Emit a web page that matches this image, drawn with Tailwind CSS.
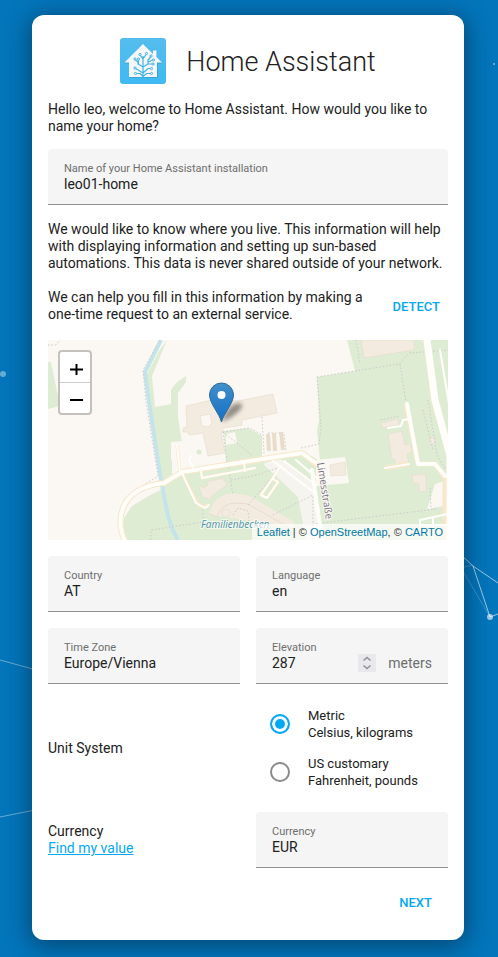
<!DOCTYPE html>
<html lang="en">
<head>
<meta charset="utf-8">
<meta name="viewport" content="width=device-width, initial-scale=1">
<title>Home Assistant</title>
<script src="https://cdn.jsdelivr.net/npm/@tailwindcss/browser@4"></script>
</head>
<body class="relative isolate min-h-screen bg-[#0375bb] pt-[15px] pr-[34px] pb-4 pl-8 font-[Roboto,'Noto_Sans',sans-serif] text-sm leading-[17px] text-[#212121]">

<svg class="absolute inset-0 -z-10 h-full w-full" viewBox="0 0 498 957" preserveAspectRatio="none" fill="none" stroke="#fff" aria-hidden="true">
  <circle cx="3" cy="374" r="3" fill="#fff" fill-opacity=".4" stroke="none"/>
  <circle cx="494" cy="64" r="1" fill="#fff" fill-opacity=".5" stroke="none"/>
  <path d="M0 660 40 671M0 817 40 809" stroke-opacity=".4"/>
  <path d="M460 554 473 566 498 583M473 566 490 617 498 614" stroke-opacity=".6"/>
  <path d="M460 566 490 617M460 568 473 565" stroke-opacity=".2"/>
  <circle cx="490" cy="617" r="3" fill="#fff" fill-opacity=".6" stroke="none"/>
</svg>

<main class="mx-auto max-w-lg rounded-xl bg-white px-4 pt-[23px] pb-[21px] shadow-[0_4px_24px_2px_rgba(0,0,0,0.4)]">
  <header class="flex items-center justify-center gap-5">
    <svg class="size-[46px]" viewBox="0 0 46 46" aria-hidden="true">
      <defs><linearGradient id="logo" x2="0" y2="1"><stop stop-color="#55bdec"/><stop offset="1" stop-color="#3fb9f4"/></linearGradient></defs>
      <rect width="46" height="46" rx="3" fill="url(#logo)"/>
      <path d="M23 7 4 25.500h5V40h29V25.500h4L37 20v-7h-4v3.500z" fill="#2b8fbd" opacity=".5"/>
      <path d="M23 6 4.500 24.500H9V39h28V24.500h5L36.500 19v-6.500H33V16z" fill="#f6f7f8"/>
      <g fill="none" stroke="#41b3e9" stroke-width="1.200">
        <path d="M23 39V18M23 38.500 20 35.500H16M23 38.500 26.500 35.500H31M23 35 15.500 30.500M23 35 28 30.500H31.500M23 29 18 26V24L15 21.500M23 29 28 26V22L31 18.500M28 26h5M18.500 27v-5M23 21 20 17M23 21 26 16.500M28 24l5-2"/>
        <g fill="#f6f7f8" stroke-width="1"><circle cx="20" cy="16.500" r="1.100"/><circle cx="26.500" cy="15.500" r="1.100"/><circle cx="15" cy="21" r="1.100"/><circle cx="18.500" cy="21" r="1.100"/><circle cx="31" cy="18" r="1.100"/><circle cx="33.500" cy="22" r="1.100"/><circle cx="33" cy="26" r="1.100"/><circle cx="15" cy="30" r="1.100"/><circle cx="31.500" cy="30.500" r="1.100"/><circle cx="15.500" cy="35.500" r="1.100"/><circle cx="31.500" cy="35.500" r="1.100"/></g>
      </g>
    </svg>
    <h1 class="pt-0.5 text-[27px] leading-[44px] font-light">Home Assistant</h1>
  </header>

  <form>
    <p class="mt-[17px]">Hello leo, welcome to Home Assistant. How would you like to name your home?</p>
    <div class="mt-3.5 flex h-14 flex-col rounded-t border-b border-[#8e8e8e] bg-[#f5f5f5] px-4 pt-[13px]">
      <label for="name" class="text-[11px] leading-[14px] text-[#6e6e6e]">Name of your Home Assistant installation</label>
      <input id="name" value="leo01-home" class="h-4 w-full bg-transparent outline-none">
    </div>
    <p class="mt-4">We would like to know where you live. This information will help with displaying information and setting up sun-based automations. This data is never shared outside of your network.</p>
    <div class="mt-[17px] flex items-center justify-between">
      <p class="flex-1">We can help you fill in this information by making a one-time request to an external service.</p>
      <button type="button" class="ml-2 px-2 py-2 text-[13px] font-medium text-[#03a9f4]">DETECT</button>
    </div>

    <div class="relative mt-[17px] h-[200px] overflow-hidden bg-[#fbf8f3]">
      <svg class="h-full w-full" viewBox="0 0 400 200" preserveAspectRatio="xMidYMid slice" fill="none" role="img" aria-label="Map of your home">
        <g fill="#dfecd4">
          <path d="M0 22h3l9 44-12 3zM119 0 104 36l3 31 16-3v-14l5-7 10-7v6l-8 11v24l6 38h-12v33l-2-3-7 11 6 16 7 46H78l-5-20 3-20 8-12 20-12 11-5-17-113 13-25z"/>
          <path d="m113 143 17-7 24-9 90-13 20 2 49 37-1 47H123z"/>
          <path d="m176 91 24-3 14 8v22l-36 5zM269 37l38-6-8-31h101v140l-13 4-11 35-88 14-5-22-5-50h-6l-3-31 2-10zM280 183l100-14 20-4v35H282z"/>
        </g>
        <path d="m178 94 9-2 2 11-11 2zM123 102l11-1 22 3 3 22-31 6-5-14zM268 120l29-3 4 26-33 3z" fill="#fbf8f3"/>
        <path d="m231 118 35 27 9 55h-17l-8-43-35-33z" fill="#f6f4ef"/>
        <g fill="#f4ebe0" stroke="#e7dccf" stroke-width=".7">
          <path d="m138 66 26-6 26 1 35-7 4 19-35 7v5l-19 3v4h-2l4 21-17 3-5-23-14 2-1-3h-5v-4l4-1z"/>
          <path d="m313 0 3 18 50-8V0zM333 83l17-4 1 6-17 3zM340 94l14-3 3 14 5-1 2 8-5 2 2 10-13 2-1-6-3-1zM282 125l15-3 1 13-15 1zM364 135l14-1v18l-7-1v-7l-6-1zM382 98l5-1v7h-5zM202 177l5-1 1 5-6 1z"/>
          <path d="m151 147 3-1 2 2 4-3-1-3 16-4 2 3 2 4-14 10-4 5-3-3-3 1z"/>
          <path d="M165 175c3-13 12-19 25-17 8 1 13 2 17 6l38 22" stroke="#f4ebe0" stroke-width="8"/>
          <path d="m162 174 7 3c3-9 10-14 19-14l12 1 42 24" stroke-width="1"/>
          <circle cx="178" cy="173" r="4"/>
        </g>
        <path d="m152 76 10-2 2 9-4 4-6-1z" fill="#fbf8f3" stroke="#e7dccf" stroke-width=".7"/>
        <circle cx="151" cy="112" r="2.500" fill="#dcead0"/>
        <path d="M113 0 97 32l4 30 9 59 4 25c4 17 5 36 16 54" stroke="#c5e4ea" stroke-width="4"/>
        <g stroke="#ccc9cc" stroke-dasharray="1.500 2">
          <path d="m112 0-17 30 3 32 12 74-14 9M103 200v-10l52-8V164M0 5h8l4-5M308 0l4 24M269 37l82-13 10-11 39-3M269 37l4 50-2 17-18 4M352 24l6 38M175 92l27-4 12 7M175 92l30 24M175 92l4 29M214 77l2 36M220 93h16l2 18M332 80l20-4M375 70l10 40M382 148l1 20M258 185l130-16"/>
          <path d="m200 165 30-35M225 175l40-20M180 124l5 31M183 140l22-4 25-8M185 175l5-7 10 3 1 10M265 200v-45M380 60l9 55 9 15"/>
        </g>
        <g stroke="#f8e7c8" stroke-width="6" stroke-linejoin="round">
          <path d="M78 203C67 183 69 148 116 143l18-11 87-14 33-5 19 15M378 0l8 60 15 48"/>
          <path d="m132 133-3-28M134 133l18 34 9-2" stroke-width="3"/>
          <path d="m358 64 12 60h17l10 14v70M337 128l24-4" stroke-width="5"/>
          <path d="m153 131 1 7 53-10M196 123l1 8M233 126l-20 29 6 3 11-16-5-3" stroke-width="3"/>
        </g>
        <g stroke="#fffefb" stroke-linecap="round" stroke-linejoin="round">
          <path d="M78 203C67 183 69 148 116 143l18-11 87-14 33-5 19 14" stroke-width="4"/>
          <path d="m132 133-3-28M134 133l14 30 9 5 4-3M153 131l1 7 53-10M196 123l1 8M145 127l-4-7 2-4M337 128l24-4M340 88l13-2 2-6 7-1" stroke-width="2"/>
          <path d="m359 64 11 60h17l10 12M264 130l10 70" stroke-width="4"/>
          <path d="m379 0 8 60 15 56v84" stroke-width="7"/>
          <path d="m225 121 43 33M236 121l32 24M248 120l22 19M233 126l-20 29 6 3 11-16-5-3M392 10l10 60M372 190v-10l28-6M372 185h28M385 178v22" stroke-width="2"/>
        </g>
        <g stroke="#e9dccb" stroke-width="4"><path d="m220 94 1 17M226 93l1 18M233 92l2 18"/></g>
        <text x="153" y="188" font-family="Open Sans, sans-serif" font-size="10" font-style="italic" fill="#4b91a7" stroke="#f4f8ee" stroke-width="2" paint-order="stroke">Familienbecken</text>
        <text transform="translate(269 123) rotate(81)" font-family="Open Sans, sans-serif" font-size="10" fill="#77747f" stroke="#fbf8f3" stroke-width="2" paint-order="stroke">Limesstraße</text>
        <defs><linearGradient id="pin" x2="0" y2="1"><stop stop-color="#438fcb"/><stop offset="1" stop-color="#126fc6"/></linearGradient><filter id="blur" x="-30%" y="-30%" width="160%" height="160%"><feGaussianBlur stdDeviation="2"/></filter></defs>
        <path d="M174 82c3-10 9-19 17-19 7 1 2 10-17 19z" fill="#000" opacity=".4" filter="url(#blur)"/>
        <path d="M173.500 82c-2-8-12-19-12-27a12 12 0 0 1 24 0c0 8-10 19-12 27z" fill="url(#pin)" stroke="#2e6c97"/>
        <circle cx="173.500" cy="55" r="4" fill="#fff"/>
      </svg>
      <div class="absolute top-2.5 left-2.5 w-[34px] rounded border-2 border-[#c5c2be] bg-white text-black">
        <button type="button" aria-label="Zoom in" class="flex h-[31px] w-full items-center justify-center border-b border-[#ccc] pt-1 pl-0.5"><svg class="size-[13px]" viewBox="0 0 13 13" stroke="currentColor" stroke-width="2"><path d="M0 6.500h13M6.500 1v11"/></svg></button>
        <button type="button" aria-label="Zoom out" class="flex h-[30px] w-full items-center justify-center pt-0.5 pl-0.5"><svg class="size-[13px]" viewBox="0 0 13 13" stroke="currentColor" stroke-width="2"><path d="M0 7h13"/></svg></button>
      </div>
      <div class="absolute right-0 bottom-0 bg-white/70 px-[5px] font-['Liberation_Sans',Arial,sans-serif] text-[11px] leading-4 text-[#333]"><a href="#" class="text-[#0078a8]">Leaflet</a> | © <a href="#" class="text-[#0078a8]">OpenStreetMap</a>, © <a href="#" class="text-[#0078a8]">CARTO</a></div>
    </div>

    <div class="mt-4 grid grid-cols-2 gap-4">
      <div class="flex h-14 flex-col rounded-t border-b border-[#8e8e8e] bg-[#f5f5f5] px-4 pt-[13px]">
        <label for="country" class="text-[11px] leading-[14px] text-[#6e6e6e]">Country</label>
        <input id="country" value="AT" class="h-4 w-full bg-transparent outline-none">
      </div>
      <div class="flex h-14 flex-col rounded-t border-b border-[#8e8e8e] bg-[#f5f5f5] px-4 pt-[13px]">
        <label for="language" class="text-[11px] leading-[14px] text-[#6e6e6e]">Language</label>
        <input id="language" value="en" class="h-4 w-full bg-transparent outline-none">
      </div>
      <div class="flex h-14 flex-col rounded-t border-b border-[#8e8e8e] bg-[#f5f5f5] px-4 pt-[13px]">
        <label for="zone" class="text-[11px] leading-[14px] text-[#6e6e6e]">Time Zone</label>
        <input id="zone" value="Europe/Vienna" class="h-4 w-full bg-transparent outline-none">
      </div>
      <div class="flex h-14 flex-col rounded-t border-b border-[#8e8e8e] bg-[#f5f5f5] px-4 pt-[13px]">
        <label for="elevation" class="text-[11px] leading-[14px] text-[#6e6e6e]">Elevation</label>
        <div class="flex h-4 items-center">
          <input id="elevation" inputmode="numeric" value="287" class="h-4 w-full min-w-0 flex-1 bg-transparent outline-none">
          <svg class="h-[18px] w-[18px] shrink-0 bg-[#e9e9ed]" viewBox="0 0 18 18" fill="none" stroke="#8f8f9d" stroke-width="1.500" aria-hidden="true"><path d="m5.500 6.500 3.500-3 3.500 3M5.500 11.500l3.500 3 3.500-3"/></svg>
          <span class="ml-3 text-[#6e6e6e]">meters</span>
        </div>
      </div>
    </div>

    <fieldset class="mt-4 grid grid-cols-2 items-center gap-4">
      <span id="units">Unit System</span>
      <div role="radiogroup" aria-labelledby="units" class="text-[13px]">
        <label class="flex h-12 items-center gap-[18px] pl-3.5"><input type="radio" name="unit" checked class="size-5 shrink-0 appearance-none rounded-full border-2 border-[#03a9f4] bg-[#03a9f4] shadow-[inset_0_0_0_3px_white]"><span>Metric<br>Celsius, kilograms</span></label>
        <label class="flex h-12 items-center gap-[18px] pl-3.5"><input type="radio" name="unit" class="size-5 shrink-0 appearance-none rounded-full border-2 border-[#8a8a8a]"><span>US customary<br>Fahrenheit, pounds</span></label>
      </div>
    </fieldset>

    <div class="mt-4 grid grid-cols-2 items-center gap-4">
      <div>Currency<br><a href="#" class="text-[#03a9f4] underline">Find my value</a></div>
      <div class="flex h-14 flex-col rounded-t border-b border-[#8e8e8e] bg-[#f5f5f5] px-4 pt-[13px]">
        <label for="currency" class="text-[11px] leading-[14px] text-[#6e6e6e]">Currency</label>
        <input id="currency" value="EUR" class="h-4 w-full bg-transparent outline-none">
      </div>
    </div>
    <div class="mt-[18px] flex justify-end pr-2"><button type="submit" class="px-2 py-2 text-[13px] font-medium text-[#03a9f4]">NEXT</button></div>
  </form>
</main>
</body>
</html>
